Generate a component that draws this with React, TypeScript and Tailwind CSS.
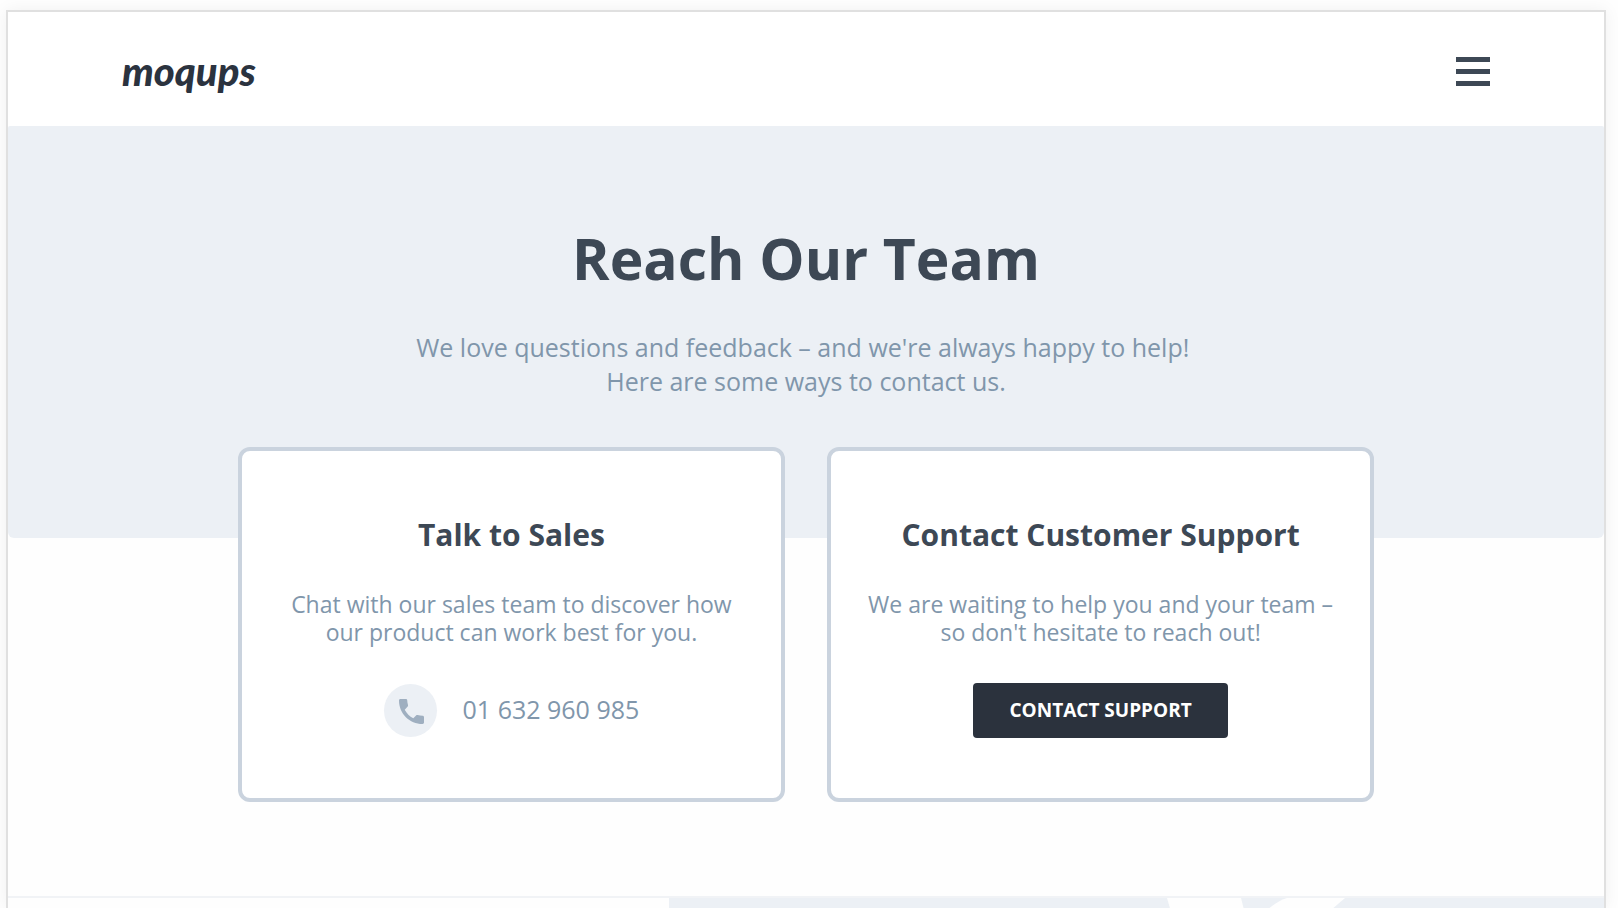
import type { ReactNode } from 'react'

interface ContactCardProps {
  title: string
  lines: string[]
  children: ReactNode
}

function MenuIcon() {
  return (
    <svg viewBox="0 0 34 29" className="h-[29px] w-[34px]" fill="#3d4855" aria-hidden="true">
      <rect width="34" height="5" />
      <rect y="12" width="34" height="5" />
      <rect y="24" width="34" height="5" />
    </svg>
  )
}

function PhoneIcon() {
  return (
    <span className="flex size-[53px] items-center justify-center rounded-full bg-[#ecf0f5]">
      <svg viewBox="0 0 25 25" className="mt-0.5 ml-0.5 size-[25px]" fill="#9fafc0" aria-hidden="true">
        <path d="M1.4 0H7a1.200 1.200 0 0 1 1.200 1.100c.1 1.700.3 3.400.8 5 .1.500 0 1-.3 1.400L5.700 10.800c2 3.700 4.900 6.600 8.600 8.500l3-3c.3-.3.8-.4 1.300-.3 1.700.5 3.300.8 5 .8.8 0 1.400.6 1.400 1.400v5.400c0 .8-.6 1.400-1.400 1.400C10.600 25 0 14.400 0 1.400 0 .6.600 0 1.400 0z" />
      </svg>
    </span>
  )
}

function ContactCard({ title, lines, children }: ContactCardProps) {
  return (
    <section className="flex flex-1 flex-col items-center rounded-xl border-4 border-[#cad3de] bg-white pt-16 pb-[60px] text-center">
      <h2 className="text-[30px] leading-10 font-bold text-[#3d4855]">{title}</h2>
      <p className="mt-[35px] text-[23px] leading-7 text-[#8096ab]">
        {lines.map((line) => (
          <span key={line} className="block">{line}</span>
        ))}
      </p>
      <div className="mt-9 flex h-[56px] items-center">{children}</div>
    </section>
  )
}

export default function App() {
  return (
    <div className="h-screen overflow-hidden bg-[#fefefe] pt-2.5 pr-3 pl-1.5 font-['Open_Sans',sans-serif]">
      <div className="flex h-full flex-col border-2 border-b-0 border-[#e0e0e0] bg-[#fefefe] shadow-[0_0_16px_rgba(0,0,0,0.06)]">
        <header className="flex h-[114px] shrink-0 items-center justify-between bg-white px-[114px] pt-1">
          <a href="#" className="font-['Lato',sans-serif] text-[40px] leading-none font-black text-[#2b333f] italic">
            moqups
          </a>
          <button type="button" aria-label="Menu">
            <MenuIcon />
          </button>
        </header>

        <main>
          <div className="h-[412px] rounded-t-xs rounded-b-md bg-[#ecf0f5] pt-[94px] text-center">
            <h1 className="text-[57px] leading-[76px] font-bold text-[#3d4855]">Reach Our Team</h1>
            <p className="mt-[34px] text-[25px] leading-[34px] text-[#8096ab]">
              We love questions and feedback – and we're always happy to help!&nbsp;
              <br />
              Here are some ways to contact us.
            </p>
          </div>

          <div className="mx-auto -mt-[91px] flex w-[71.2%] gap-[42px]">
            <ContactCard
              title="Talk to Sales"
              lines={['Chat with our sales team to discover how', 'our product can work best for you.']}
            >
              <div className="flex items-center gap-[26px]">
                <PhoneIcon />
                <a href="tel:01632960985" className="text-[25px] text-[#8096ab]">01 632 960 985</a>
              </div>
            </ContactCard>
            <ContactCard
              title="Contact Customer Support"
              lines={['We are waiting to help you and your team –', "so don't hesitate to reach out!"]}
            >
              <button type="button" className="h-[55px] rounded bg-[#2b323d] px-9 text-[19px] font-bold text-white">
                CONTACT SUPPORT
              </button>
            </ContactCard>
          </div>
        </main>

        {/* Top edge of the next section */}
        <div className="mt-[94px] flex h-12 shrink-0 border-t-2 border-[#f1f3f6]">
          <div className="w-[661px]" />
          <div className="flex-1 bg-[#ecf0f5]">
            <svg viewBox="0 0 935 48" className="h-12 w-[935px]" fill="#fefefe" aria-hidden="true">
              <path d="M498 0h74l12 48h-72z" />
              <path d="M618 0h58L620 48h-62L598 12Q610 2 618 0z" />
            </svg>
          </div>
        </div>
      </div>
    </div>
  )
}
